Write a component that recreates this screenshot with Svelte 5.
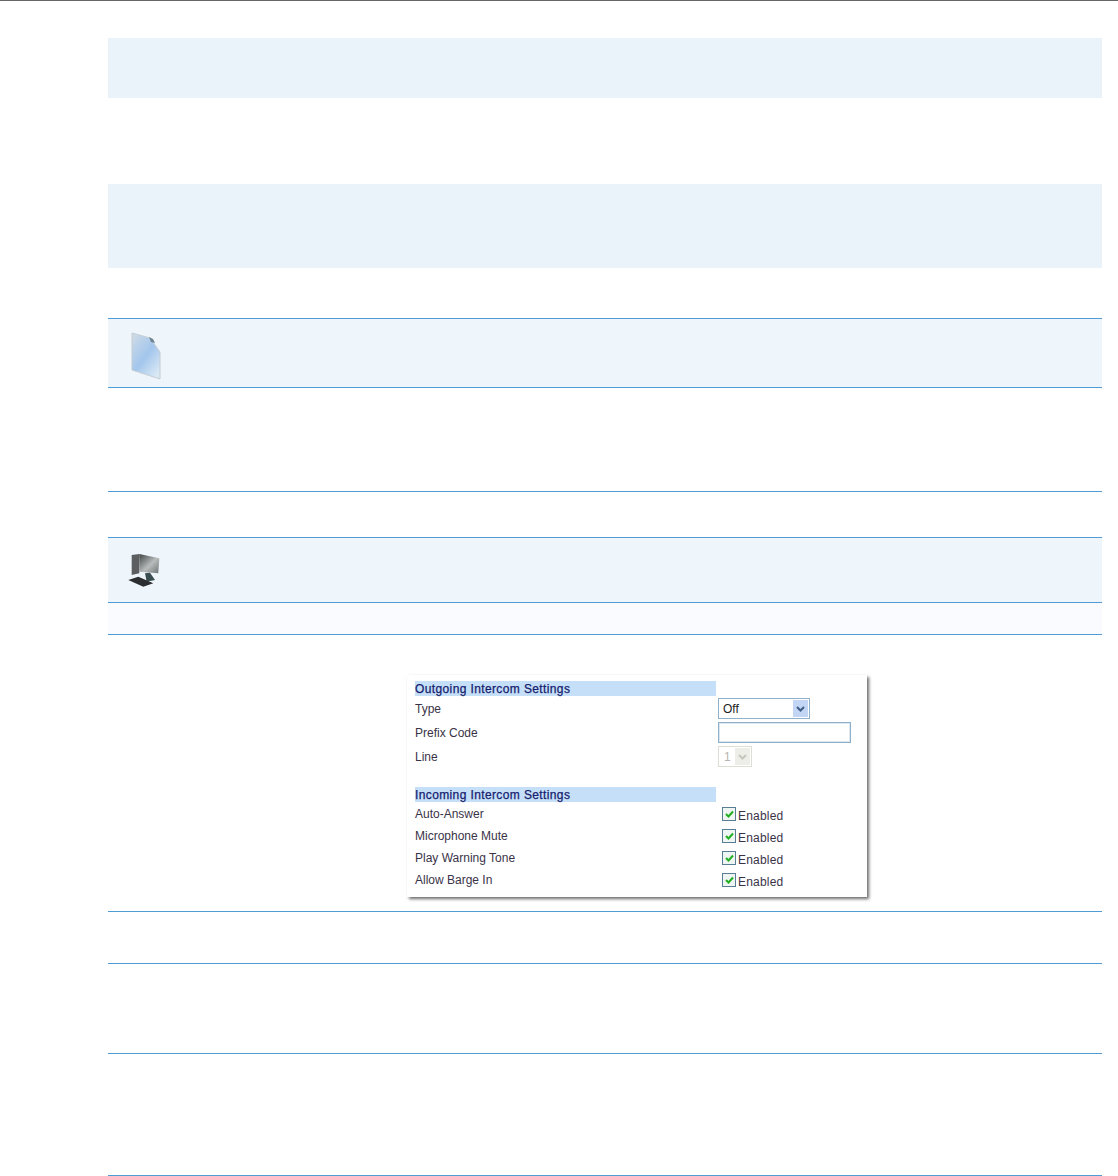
<script>
  const outgoing = [
    { label: 'Type', kind: 'select' },
    { label: 'Prefix Code', kind: 'input' },
    { label: 'Line', kind: 'line' }
  ];
  const incoming = ['Auto-Answer', 'Microphone Mute', 'Play Warning Tone', 'Allow Barge In'];
</script>

<div class="page">
  <div class="topline"></div>
  <div class="content">
    <div class="band b1"></div>
    <div class="band b2"></div>

    <div class="note">
      <svg class="icon" width="36" height="50" viewBox="0 0 36 50">
        <defs>
          <linearGradient id="pg" x1="0" y1="0" x2="0.8" y2="1">
            <stop offset="0" stop-color="#d3dde4" />
            <stop offset="0.25" stop-color="#bcd2ea" />
            <stop offset="0.55" stop-color="#a3c6ec" />
            <stop offset="1" stop-color="#dbe9f5" />
          </linearGradient>
        </defs>
        <path d="M3 1 L21 6 L31 20 L31 47 L3 38 Z" fill="url(#pg)" stroke="#c3ccd2" stroke-width="1" />
        <path d="M20 5 L24 7 L26 11 L22 10 Z" fill="#6f828f" />
      </svg>
    </div>
    <div class="plain p1"></div>

    <div class="step">
      <svg class="icon" width="36" height="38" viewBox="0 0 36 38">
        <defs>
          <linearGradient id="sc" x1="0" y1="0" x2="1" y2="1">
            <stop offset="0" stop-color="#3f4243" />
            <stop offset="0.55" stop-color="#b9bcbc" />
            <stop offset="1" stop-color="#6d7476" />
          </linearGradient>
        </defs>
        <path d="M4.7 4 L12.3 3 L12.3 22.3 L4.7 24 Z" fill="#5c5e5f" />
        <path d="M12.3 3 L32.3 7.3 L31.3 22.3 L12.3 20.7 Z" fill="url(#sc)" />
        <path d="M18 22.3 L23 21.7 L28 29 L19.7 30.7 Z" fill="#3a4d50" />
        <path d="M1.3 29 L11.3 25.7 L26.3 32.3 L16.3 35.7 Z" fill="#2c2e2f" />
      </svg>
    </div>
    <div class="sub"></div>

    <div class="figure">
      <div class="panel">
        <div class="heading">Outgoing Intercom Settings</div>
        {#each outgoing as row}
          <div class="row out">
            <span class="label">{row.label}</span>
            {#if row.kind === 'select'}
              <span class="sel"><span class="val">Off</span><span class="arrow"><svg width="9" height="6" viewBox="0 0 9 6"><path d="M1 1 L4.5 4.5 L8 1" fill="none" stroke="#3f5d86" stroke-width="2" /></svg></span></span>
            {:else if row.kind === 'input'}
              <span class="inp"></span>
            {:else}
              <span class="linesel"><span class="lval">1</span><span class="larrow"><svg width="9" height="6" viewBox="0 0 9 6"><path d="M1 1 L4.5 4.5 L8 1" fill="none" stroke="#c5c7bd" stroke-width="2" /></svg></span></span>
            {/if}
          </div>
        {/each}
        <div class="heading second">Incoming Intercom Settings</div>
        {#each incoming as label}
          <div class="row inc">
            <span class="label">{label}</span>
            <span class="check">
              <span class="box"><svg width="9" height="8" viewBox="0 0 9 8"><path d="M1 4 L3.5 6.5 L8 1.5" fill="none" stroke="#22b022" stroke-width="2" /></svg></span>
              <span class="en">Enabled</span>
            </span>
          </div>
        {/each}
      </div>
    </div>

    <div class="rule r1"></div>
    <div class="rule r2"></div>
    <div class="rule r3"></div>
  </div>
</div>

<style>
  :global(body) {
    margin: 0;
    background: #fff;
  }
  .page {
    width: 1118px;
    height: 1176px;
    overflow: hidden;
    font-family: "Liberation Sans", Arial, sans-serif;
  }
  .topline {
    height: 1px;
    background: #666;
  }
  .content {
    margin-left: 108px;
    width: 994px;
  }
  .band {
    background: #ebf3fa;
  }
  .b1 {
    margin-top: 37px;
    height: 60px;
  }
  .b2 {
    margin-top: 86px;
    height: 84px;
  }
  .note {
    margin-top: 50px;
    height: 68px;
    border-top: 1px solid #4f9bd3;
    border-bottom: 1px solid #4f9bd3;
    background: #eef5fb;
    display: flex;
    align-items: center;
    padding-left: 21px;
  }
  .icon {
    display: block;
    filter: blur(0.5px);
  }
  .note .icon {
    margin-top: 8px;
  }
  .plain {
    height: 103px;
    border-bottom: 1px solid #4f9bd3;
  }
  .step {
    margin-top: 45px;
    height: 64px;
    border-top: 1px solid #4f9bd3;
    border-bottom: 1px solid #4f9bd3;
    background: #eef5fb;
    display: flex;
    align-items: center;
    padding-left: 19px;
  }
  .sub {
    height: 31px;
    border-bottom: 1px solid #4f9bd3;
    background: #f9fbfe;
  }
  .figure {
    height: 277px;
    border-bottom: 1px solid #4f9bd3;
    box-sizing: border-box;
    padding: 40px 0 0 299px;
  }
  .panel {
    width: 460px;
    height: 222px;
    padding: 6px 0 0 8px;
    box-sizing: border-box;
    background: #fff;
    box-shadow: 2px 2px 3px #6b6b6b;
    font-size: 12px;
    color: #3a3348;
  }
  .heading {
    width: 301px;
    height: 15px;
    line-height: 16px;
    background: #c4dff7;
    color: #16206e;
    font-weight: 400;
    -webkit-text-stroke: 0.25px #16206e;
    letter-spacing: 0.38px;
    white-space: nowrap;
  }
  .second {
    margin-top: 19px;
  }
  .row {
    display: flex;
    align-items: center;
  }
  .label {
    width: 303px;
    flex: none;
    padding-top: 2px;
    box-sizing: border-box;
  }
  .out {
    height: 24px;
  }
  .inc {
    height: 22px;
  }
  .sel {
    width: 92px;
    height: 21px;
    margin-top: 1px;
    box-sizing: border-box;
    border: 1px solid #8fb0cb;
    display: flex;
    align-items: center;
    justify-content: space-between;
    padding: 1px 1px 1px 4px;
    background: #fff;
  }
  .val {
    color: #222;
  }
  .arrow {
    width: 15px;
    height: 17px;
    background: #c3d5f5;
    display: flex;
    align-items: center;
    justify-content: center;
  }
  .inp {
    width: 133px;
    height: 21px;
    margin-top: 1px;
    box-sizing: border-box;
    border: 1px solid #8fb0cb;
    box-shadow: inset 0 0 0 1px #dbe6ef;
    background: #fff;
  }
  .linesel {
    width: 34px;
    height: 21px;
    margin-top: 1px;
    box-sizing: border-box;
    border: 1px solid #dddfd2;
    display: flex;
    align-items: center;
    justify-content: space-between;
    padding: 1px;
  }
  .lval {
    color: #b5b5b0;
    padding-left: 4px;
  }
  .larrow {
    width: 15px;
    height: 17px;
    background: #eeeee8;
    display: flex;
    align-items: center;
    justify-content: center;
  }
  .check {
    display: flex;
    align-items: center;
    margin-left: 4px;
    position: relative;
    top: 3px;
  }
  .box {
    width: 14px;
    height: 14px;
    box-sizing: border-box;
    border: 1px solid #5a7d96;
    background: #eef5f2;
    display: flex;
    align-items: center;
    justify-content: center;
    margin-right: 2px;
    position: relative;
    top: -2px;
  }
  .box svg {
    display: block;
  }
  .en {
    letter-spacing: 0.2px;
  }
  .rule {
    border-bottom: 1px solid #4f9bd3;
  }
  .r1 {
    height: 51px;
  }
  .r2 {
    height: 89px;
  }
  .r3 {
    height: 121px;
  }
</style>
